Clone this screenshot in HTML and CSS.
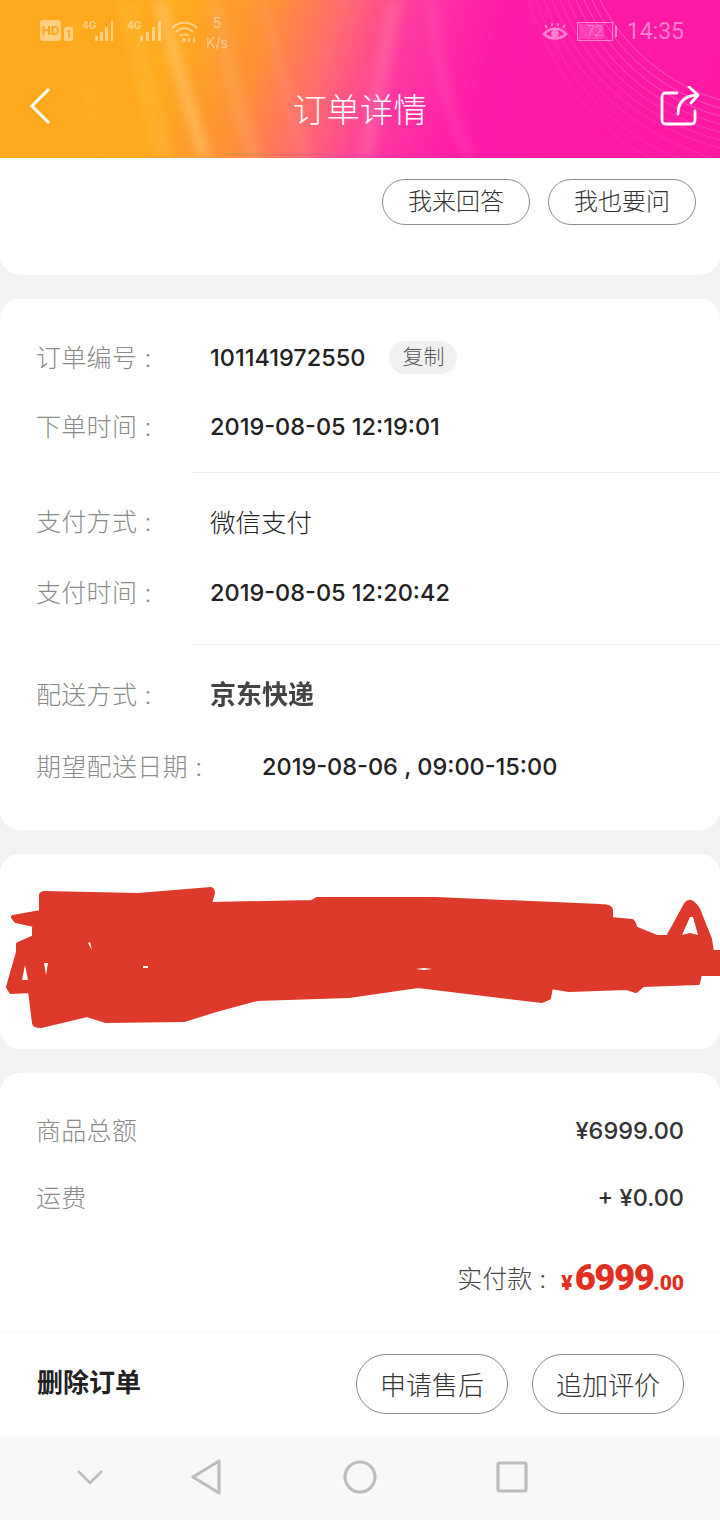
FILE: index.html
```html
<!DOCTYPE html>
<html>
<head>
    <title>订单详情</title>
    <link rel="stylesheet" href="styles.css">
</head>
<body>

<div class="page">
    <!-- header with status bar -->
    <div class="header">
        <svg class="streaks" width="720" height="158" viewBox="0 0 720 158" fill="none">
            <path d="M125 0C140 50 150 110 165 158" stroke="#ffc040" stroke-width="20" opacity=".35"/>
            <path d="M160 0C172 50 190 110 205 158" stroke="#ffcf80" stroke-width="14" opacity=".45"/>
            <path d="M215 0C225 50 235 110 255 158" stroke="#ffb070" stroke-width="16" opacity=".3"/>
            <path d="M70 0C78 50 90 110 100 158" stroke="#ffc040" stroke-width="10" opacity=".25"/>
            <path d="M262 0C275 50 290 110 305 158" stroke="#ffb0a0" stroke-width="8" opacity=".2"/>
            <path d="M395 0C385 50 375 110 365 158" stroke="#ff90b0" stroke-width="16" opacity=".3"/>
            <path d="M430 0C436 50 445 110 470 158" stroke="#ff7cc8" stroke-width="10" opacity=".2"/>
        </svg>
        <svg class="streaks streaks-fine" width="720" height="158" viewBox="0 0 720 158" fill="none" stroke="#ff90d4">
            <path d="M600 0C625 50 670 85 720 100" opacity=".5"/>
            <path d="M592 0C618 55 665 93 720 108" opacity=".45"/>
            <path d="M584 0C611 60 660 100 720 116" opacity=".4"/>
            <path d="M576 0C604 65 655 107 720 124" opacity=".35"/>
            <path d="M568 0C597 70 650 114 720 132" opacity=".3"/>
            <path d="M560 0C590 75 645 120 720 140" opacity=".25"/>
            <path d="M552 0C583 80 640 126 720 148" opacity=".2"/>
            <path d="M544 0C576 85 635 132 712 158" opacity=".18"/>
            <path d="M536 0C569 90 620 136 680 158" opacity=".15"/>
            <path d="M528 0C562 95 610 138 650 158" opacity=".12"/>
        </svg>
        <div class="status-bar">
            <div class="status-left">
                <span class="hd-icon">HD</span>
                <span class="sim-icon">1</span>
                <span class="signal">
                    <span class="net">4G</span>
                    <svg width="20" height="22" viewBox="0 0 20 22" fill="#fff"><rect x="0" y="16" width="3" height="5"/><rect x="5" y="12" width="3" height="9"/><rect x="10" y="7" width="3" height="14"/><rect x="16" y="1" width="2" height="20"/></svg>
                </span>
                <span class="signal signal-two">
                    <span class="net">4G</span>
                    <svg width="23" height="22" viewBox="0 0 23 22" fill="#fff"><rect x="0" y="16" width="3" height="5"/><rect x="6" y="12" width="3" height="9"/><rect x="12" y="7" width="3" height="14"/><rect x="18" y="1" width="3" height="20"/></svg>
                </span>
                <svg class="wifi" width="27" height="24" viewBox="0 0 27 24" fill="none" stroke="#fff" stroke-width="2"><path d="M1 8C8 1 19 1 26 8"/><path d="M5 12C10 7 17 7 22 12"/><path d="M9 16C11 14 16 14 18 16"/><circle cx="13" cy="20" r="2" fill="#fff" stroke="none"/><path d="M19 17v6l-3-3zM22 17v6l3-3z" fill="#fff" stroke="none"/></svg>
                <span class="speed">5<br>K/s</span>
            </div>
            <div class="status-right">
                <svg width="26" height="20" viewBox="0 0 26 20" fill="none" stroke="#fff"><path d="M2 13C8 6 18 6 24 13C18 19 8 19 2 13Z" stroke-width="2.6"/><circle cx="13" cy="12.5" r="3.8" fill="#fff" stroke="none"/><path d="M5 7L3 4M10 5V2M16 5V2M21 7l2-3" stroke-width="1.8"/></svg>
                <span class="battery"><span class="battery-fill"></span><span class="battery-num">72</span></span>
                <span class="battery-tip"></span>
                <span class="clock">14:35</span>
            </div>
        </div>
        <div class="title-bar">
            <svg class="back" width="24" height="38" viewBox="0 0 24 38" fill="none" stroke="#fff" stroke-width="3"><path d="M20 2L3 19L20 36"/></svg>
            <span class="title">订单详情</span>
            <svg class="share" width="40" height="40" viewBox="0 0 40 40" fill="none" stroke="#fff" stroke-width="2.8" stroke-linecap="round" stroke-linejoin="round"><path d="M17 7H6Q2 7 2 11V34Q2 38 6 38H31Q35 38 35 34V25"/><path d="M18 28C18 17 24 10 37 9"/><path d="M29 1L38 9L31 17"/></svg>
        </div>
    </div>

    <div class="card card-qa">
        <span class="pill">我来回答</span>
        <span class="pill">我也要问</span>
    </div>

    <div class="card card-info">
        <div class="info-group group-order">
            <div class="info-row">
                <span class="label">订单编号 :</span>
                <span class="value">101141972550</span>
                <span class="copy">复制</span>
            </div>
            <div class="info-row">
                <span class="label">下单时间 :</span>
                <span class="value">2019-08-05 12:19:01</span>
            </div>
        </div>
        <div class="info-line"></div>
        <div class="info-group group-pay">
            <div class="info-row">
                <span class="label">支付方式 :</span>
                <span class="value value-cjk">微信支付</span>
            </div>
            <div class="info-row">
                <span class="label">支付时间 :</span>
                <span class="value">2019-08-05 12:20:42</span>
            </div>
        </div>
        <div class="info-line"></div>
        <div class="info-group group-ship">
            <div class="info-row">
                <span class="label">配送方式 :</span>
                <span class="value value-bold">京东快递</span>
            </div>
            <div class="info-row">
                <span class="label label-wide">期望配送日期 :</span>
                <span class="value">2019-08-06 , 09:00-15:00</span>
            </div>
        </div>
    </div>

    <div class="card card-address">
        <!-- scribbled out address -->
        <svg width="720" height="195" viewBox="0 0 720 195" fill="#dd3a2c" stroke="#dd3a2c" stroke-width="4" stroke-linejoin="round">
            <path d="M41 41Q42 39 44 39L138 41L211 35Q213 36 213 39L210 50L312 48L317 45H436L601 52Q611 52 611 56V65L632 67Q635 70 635 74L657 83H668L686 50Q691 44 698 55L710 85L712 98H722V120H700L698 129L643 131L636 137L627 134L569 136L551 133L549 144L542 147L418 132L349 142L257 145L216 156L184 166L106 167L87 161L41 172Q34 172 34 169L30 137L11 138L8 133L18 98V90L34 83V71L16 67L13 63L41 58Z"/>
            <g fill="#fff" stroke="none">
                <path d="M22 126L25 111L28 126Z"/>
                <path d="M44 109L48 109L46 121Z"/>
                <path d="M88 89L90 88L92 96Z"/>
                <path d="M143 112H148V114H143Z"/>
                <path d="M416 115L424 114L432 115L424 116Z"/>
                <path d="M682 81L690 63L693 63L698 81L690 79Z"/>
            </g>
        </svg>
    </div>

    <div class="card card-price">
        <div class="price-rows">
            <div class="price-row">
                <span class="label">商品总额</span>
                <span class="amount">¥6999.00</span>
            </div>
            <div class="price-row">
                <span class="label">运费</span>
                <span class="amount">+ ¥0.00</span>
            </div>
            <div class="paid-row">
                <span class="paid-label">实付款 :</span>
                <span class="paid-price"><small class="yen">¥</small>6999<small>.00</small></span>
            </div>
        </div>
        <div class="actions">
            <span class="delete">删除订单</span>
            <div class="action-btns">
                <span class="pill pill-big">申请售后</span>
                <span class="pill pill-big">追加评价</span>
            </div>
        </div>
    </div>

    <div class="nav-bar">
        <svg width="28" height="18" viewBox="0 0 28 18" fill="none" stroke="#bdbdbd" stroke-width="2.6"><path d="M2 3L14 15L26 3"/></svg>
        <svg width="32" height="36" viewBox="0 0 32 36" fill="none" stroke="#bdbdbd" stroke-width="3.2" stroke-linejoin="round"><path d="M29 2V34L3 18Z"/></svg>
        <svg width="34" height="34" viewBox="0 0 34 34" fill="none" stroke="#bdbdbd" stroke-width="3.2"><circle cx="17" cy="17" r="15"/></svg>
        <svg width="32" height="32" viewBox="0 0 32 32" fill="none" stroke="#bdbdbd" stroke-width="3.2" stroke-linejoin="round"><rect x="2" y="2" width="28" height="28" rx="1.5"/></svg>
    </div>
</div>

</body>
</html>
```

FILE: styles.css
```css
* {
    box-sizing: border-box;
}
body {
    margin: 0;
    background: #f2f4f4;
    font-family: Inter, "Noto Sans CJK SC", sans-serif;
}
.page {
    width: 720px;
    height: 1520px;
    display: flex;
    flex-direction: column;
    overflow: hidden;
}

/* header */
.header {
    position: relative;
    height: 158px;
    flex: none;
    overflow: hidden;
    background: linear-gradient(108deg, #ffa81e 0%, #ffaa1e 24%, #ff9038 36%, #ff6a70 45%, #ff3aa0 54%, #ff1ca8 66%, #ff18a2 100%);
}
.streaks {
    position: absolute;
    top: 0;
    left: 0;
    filter: blur(5px);
}
.streaks-fine {
    filter: none;
}
.status-bar {
    position: relative;
    height: 66px;
    padding: 0 36px 0 40px;
    display: flex;
    justify-content: space-between;
    color: #fff;
    opacity: 0.45;
}
.status-left {
    display: flex;
    align-items: flex-start;
    padding-top: 20px;
}
.hd-icon {
    width: 21px;
    height: 21px;
    background: #fff;
    border-radius: 3px;
    color: #ffa81e;
    font-size: 12px;
    line-height: 21px;
    font-weight: 800;
    text-align: center;
}
.sim-icon {
    width: 9px;
    height: 14px;
    margin: 7px 0 0 3px;
    background: #fff;
    border-radius: 2px;
    color: #ffa81e;
    font-size: 10px;
    line-height: 14px;
    text-align: center;
    font-weight: 700;
}
.signal {
    display: flex;
    margin-left: 9px;
}
.signal-two {
    margin-left: 12px;
}
.net {
    font-size: 10px;
    line-height: 10px;
    font-weight: 700;
    width: 13px;
}
.wifi {
    margin-left: 8px;
}
.speed {
    margin-left: 8px;
    margin-top: -7px;
    font-size: 14px;
    line-height: 20px;
    text-align: center;
}
.status-right {
    display: flex;
    align-items: center;
    padding-bottom: 4px;
}
.battery {
    position: relative;
    width: 36px;
    height: 19px;
    margin-left: 9px;
    border: 1px solid #fff;
}
.battery-fill {
    position: absolute;
    left: 1px;
    top: 1px;
    bottom: 1px;
    width: 25px;
    background: rgba(255,255,255,0.35);
}
.battery-num {
    position: absolute;
    left: 0;
    right: 0;
    top: 0;
    font-size: 15px;
    line-height: 17px;
    font-family: Roboto, sans-serif;
    font-weight: 300;
    text-align: center;
}
.battery-tip {
    width: 2px;
    height: 11px;
    margin-left: 2px;
    background: #fff;
}
.clock {
    margin-left: 10px;
    font-family: Roboto, sans-serif;
    font-size: 23px;
    font-weight: 400;
}
.title-bar {
    position: relative;
    height: 92px;
    padding: 0 20px 0 29px;
    display: flex;
    justify-content: space-between;
    align-items: center;
}
.back {
    margin-top: -12px;
}
.title {
    position: absolute;
    left: 0;
    right: 0;
    top: 21px;
    text-align: center;
    color: #fff;
    font-size: 33.5px;
    line-height: 46px;
    font-weight: 300;
}
.share {
    margin-top: -12px;
}

/* cards */
.card {
    background: #fff;
    border-radius: 20px;
    margin-bottom: 24px;
    flex: none;
}
.card-qa {
    height: 117px;
    border-radius: 0 0 20px 20px;
    padding: 21px 24px 0 0;
    display: flex;
    justify-content: flex-end;
    align-items: flex-start;
    gap: 18px;
}
.pill {
    width: 148px;
    height: 46px;
    border: 1px solid #8c8c8c;
    border-radius: 23px;
    color: #333;
    font-size: 24px;
    line-height: 44px;
    font-weight: 300;
    text-align: center;
}
.card-info {
    height: 531px;
}
.info-group {
    padding-left: 36px;
    display: flex;
    flex-direction: column;
}
.group-order {
    height: 173px;
    padding-top: 24px;
}
.group-pay {
    height: 171px;
    padding-top: 14px;
    gap: 2px;
}
.group-ship {
    padding-top: 15px;
    gap: 3px;
}
.info-line {
    height: 1px;
    margin-left: 192px;
    background: #eeeeee;
}
.info-row {
    height: 69px;
    display: flex;
    align-items: center;
}
.info-row .label {
    width: 174px;
}
.info-row .label-wide {
    width: 226px;
}
.label {
    color: #8a8a8a;
    font-size: 25px;
    font-weight: 300;
    letter-spacing: 0.3px;
    white-space: nowrap;
    margin-top: -3px;
}
.value {
    color: #222;
    font-size: 23.5px;
    font-weight: 500;
    white-space: nowrap;
}
.value-cjk {
    font-size: 25.5px;
    font-weight: 300;
    margin-top: -2px;
}
.value-bold {
    font-size: 26px;
    font-weight: 700;
    color: #444;
    margin-top: -4px;
    filter: blur(0.4px);
}
.copy {
    margin-left: 24px;
    width: 68px;
    height: 33px;
    border-radius: 17px;
    background: #f1f1f1;
    color: #555;
    font-size: 21px;
    line-height: 31px;
    font-weight: 300;
    text-align: center;
}
.card-address {
    height: 195px;
    overflow: hidden;
}
.card-address svg {
    display: block;
}
.card-price {
    height: 362px;
    margin-bottom: 0;
    border-radius: 20px 20px 0 0;
}
.price-rows {
    height: 260px;
    padding: 24px 36px 0 36px;
    border-bottom: 1px solid #f5f5f5;
}
.price-row {
    height: 67px;
    display: flex;
    justify-content: space-between;
    align-items: center;
}
.amount {
    color: #333;
    font-size: 23.5px;
    font-weight: 500;
}
.paid-row {
    margin-top: 16px;
    display: flex;
    justify-content: flex-end;
    align-items: center;
    height: 60px;
}
.paid-label {
    color: #444;
    font-size: 25px;
    font-weight: 300;
    margin-right: 15px;
}
.paid-price {
    color: #e1301f;
    font-family: Roboto, sans-serif;
    font-size: 36.5px;
    font-weight: 900;
    letter-spacing: -1.5px;
}
.paid-price small {
    font-size: 21px;
    letter-spacing: 0;
}
.paid-price .yen {
    margin-right: 2px;
}
.actions {
    height: 102px;
    padding: 0 36px 0 37px;
    display: flex;
    justify-content: space-between;
    align-items: center;
}
.delete {
    color: #222;
    font-size: 26px;
    font-weight: 700;
    margin-top: -8px;
}
.action-btns {
    display: flex;
    gap: 24px;
}
.pill-big {
    width: 152px;
    height: 60px;
    border-radius: 30px;
    font-size: 26px;
    line-height: 61px;
}

/* android nav bar */
.nav-bar {
    flex: 1;
    background: #f8f8f8;
    display: flex;
    align-items: center;
    padding: 0 0 2px 76px;
}
.nav-bar svg:nth-child(1) {
    margin-right: 86px;
}
.nav-bar svg:nth-child(2) {
    margin-right: 121px;
}
.nav-bar svg:nth-child(3) {
    margin-right: 119px;
}
```
